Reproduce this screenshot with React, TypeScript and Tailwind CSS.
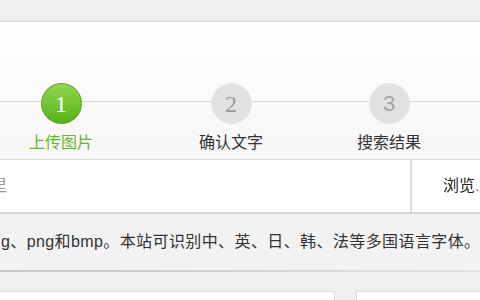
export default function App() {
  return (
    <div className="w-[480px] h-[300px] overflow-hidden bg-[#eef0ef] font-['Liberation_Sans','Noto_Sans_CJK_SC',sans-serif]">
      <div className="h-[22px] bg-[#eeefee] border-b border-[#d6d6d6]" />

      <div className="relative h-[138px] bg-gradient-to-b from-white to-[#f6f6f6] border-b border-[#dddddd]">
        <div className="absolute left-0 right-0 top-[79px] h-px bg-[#d9d9d9]" />
        <div className="relative flex pt-[61px]">
          <div className="ml-[1px] w-[120px] flex flex-col items-center">
            <div className="w-[41px] h-[41px] rounded-full border border-[#5b9e1e] bg-gradient-to-b from-[#8fd84a] to-[#58b118] flex items-center justify-center text-white text-[24px] leading-none font-['Liberation_Serif',serif]">
              1
            </div>
            <div className="mt-[9px] text-[16px] leading-[20px] text-[#66b82a]">上传图片</div>
          </div>
          <div className="ml-[50px] w-[120px] flex flex-col items-center">
            <div className="w-[41px] h-[41px] rounded-full border border-[#e6e6e6] bg-[#e1e1e1] flex items-center justify-center text-[#9a9a9a] text-[24px] leading-none font-['Liberation_Serif',serif]">
              2
            </div>
            <div className="mt-[9px] text-[16px] leading-[20px] text-[#333333]">确认文字</div>
          </div>
          <div className="ml-[38px] w-[120px] flex flex-col items-center">
            <div className="w-[41px] h-[41px] rounded-full border border-[#e6e6e6] bg-[#e1e1e1] flex items-center justify-center text-[#a5a5a5] text-[22px] leading-none">
              3
            </div>
            <div className="mt-[9px] text-[16px] leading-[20px] text-[#333333]">搜索结果</div>
          </div>
        </div>
      </div>

      <div className="flex h-[54px] bg-white border-b-2 border-[#d3d3d3]">
        <div className="w-[410px] shrink-0 flex items-center overflow-hidden">
          <span className="-ml-[9px] text-[16px] text-[#999999]">里</span>
        </div>
        <div className="flex-1 min-w-0 flex items-center border-l-2 border-[#dcdcdc] pl-[31px] text-[16px] text-[#222222] whitespace-nowrap">
          浏览<span className="text-[#c0601a]">...</span>
        </div>
      </div>

      <div className="h-[56px] bg-[#f2f2f2] flex items-center whitespace-nowrap text-[16px] tracking-[0.4px] text-[#333333]">
        <span className="ml-[1px]">g、png和bmp。本站可识别中、英、日、韩、法等多国语言字体。</span>
      </div>
      <div className="h-[2px] bg-gradient-to-r from-[#c8c8c8] via-[#d2d2d2] to-[#e4e4e4]" />

      <div className="flex pt-[19px]">
        <div className="w-[335px] h-[20px] bg-white border-t border-r border-[#dcdcdc]" />
        <div className="ml-[21px] flex-1 h-[20px] bg-white border-t border-l border-[#dcdcdc]" />
      </div>
    </div>
  );
}
